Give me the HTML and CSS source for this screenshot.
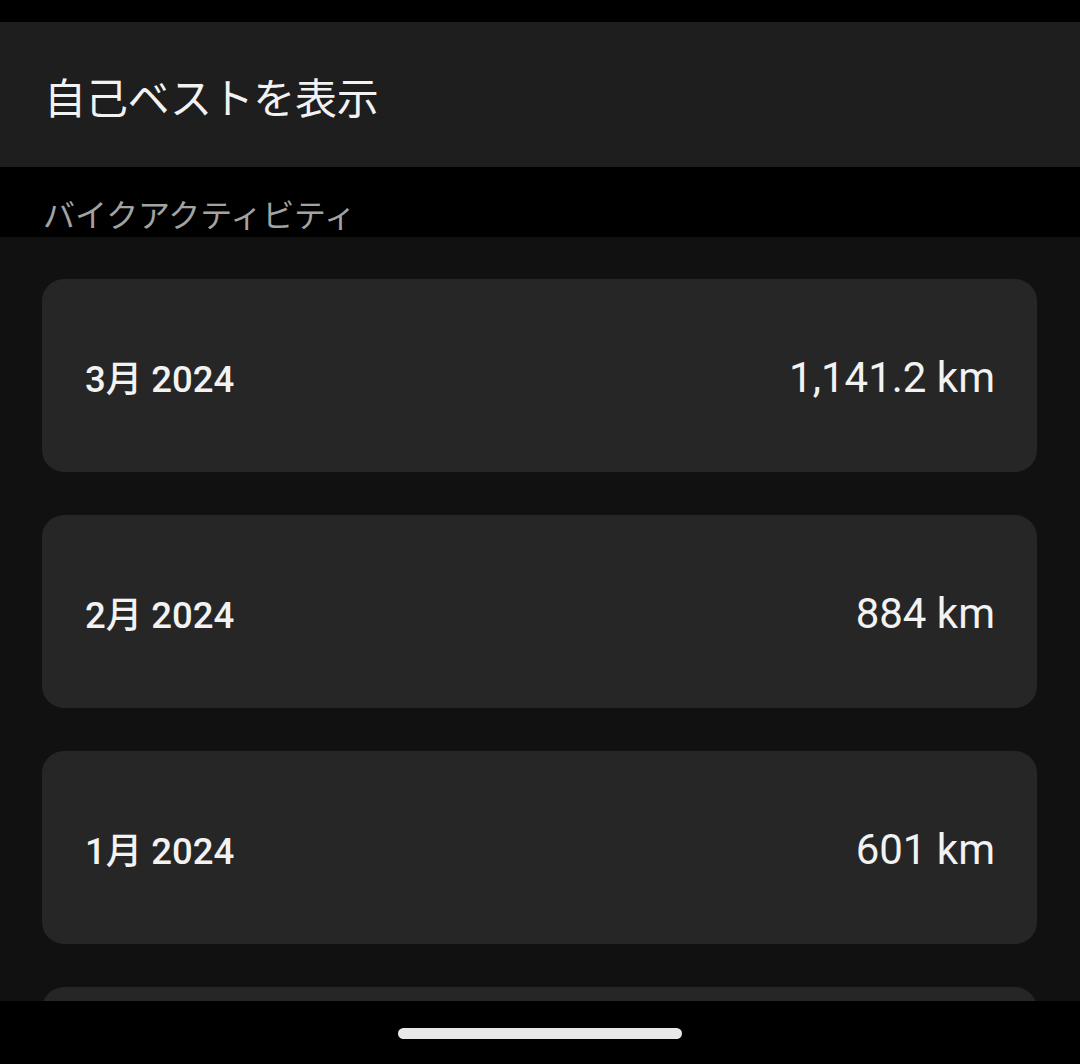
FILE: index.html
```html
<!DOCTYPE html>
<html lang="ja">
<head>
<meta charset="utf-8">
<link rel="stylesheet" href="styles.css">
</head>
<body>
<div class="screen">
  <div class="statusbar"></div>
  <div class="header"><span class="title">自己ベストを表示</span></div>
  <div class="section-label"><span>バイクアクティビティ</span></div>
  <div class="list">
    <div class="card"><span class="month">3月 2024</span><span class="dist">1,141.2 km</span></div>
    <div class="card"><span class="month">2月 2024</span><span class="dist">884 km</span></div>
    <div class="card"><span class="month">1月 2024</span><span class="dist">601 km</span></div>
    <div class="card"></div>
  </div>
  <div class="navbar"><div class="handle"></div></div>
</div>
</body>
</html>
```
FILE: styles.css
```css
html, body {
  margin: 0;
  padding: 0;
  background: #000;
}
.screen {
  width: 1080px;
  height: 1064px;
  overflow: hidden;
  display: flex;
  flex-direction: column;
  font-family: Roboto, "Noto Sans CJK JP", sans-serif;
}
.statusbar {
  height: 22px;
  flex: none;
  background: #000;
}
.header {
  height: 145px;
  flex: none;
  background: #1e1e1e;
  display: flex;
  align-items: center;
  padding-left: 44px;
}
.title {
  font-family: "Noto Sans CJK JP", sans-serif;
  font-size: 42px;
  letter-spacing: -0.3px;
  color: #f2f2f2;
  position: relative;
  top: 1px;
}
.section-label {
  height: 70px;
  flex: none;
  background: #000;
  padding-left: 43px;
  overflow: hidden;
}
.section-label span {
  display: block;
  font-family: "Noto Sans CJK JP", sans-serif;
  font-size: 32px;
  color: #a3a3a3;
  line-height: 1;
  margin-top: 30px;
  letter-spacing: -0.1px;
}
.list {
  height: 764px;
  flex: none;
  background: #111111;
  padding: 42px 43px 0 42px;
  box-sizing: border-box;
  display: flex;
  flex-direction: column;
  gap: 43px;
  overflow: hidden;
}
.card {
  height: 193px;
  flex: none;
  background: #262626;
  border-radius: 22px;
  display: flex;
  align-items: baseline;
  justify-content: space-between;
  padding: 0 42px 0 43px;
  box-sizing: border-box;
}
.card > span {
  line-height: 193px;
}
.month {
  font-weight: 500;
  font-size: 36.5px;
  color: #f2f2f2;
  position: relative;
  top: 2px;
}
.dist {
  font-size: 42px;
  color: #f2f2f2;
  position: relative;
  top: 2px;
}
.navbar {
  flex: 1;
  background: #000;
  display: flex;
  justify-content: center;
  align-items: center;
}
.handle {
  width: 284px;
  height: 11px;
  border-radius: 6px;
  background: #e8e8e8;
  margin-top: 2px;
}
```
